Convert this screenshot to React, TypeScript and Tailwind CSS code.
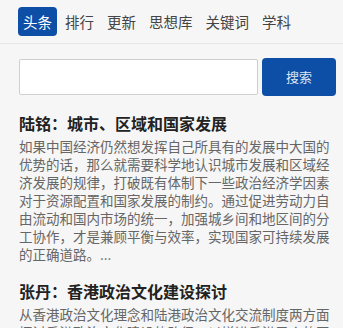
const FONT = '"Noto Sans CJK SC", "Noto Sans", sans-serif';

const tabs = ["头条", "排行", "更新", "思想库", "关键词", "学科"];

const articles = [
  {
    title: "陆铭：城市、区域和国家发展",
    body: "如果中国经济仍然想发挥自己所具有的发展中大国的优势的话，那么就需要科学地认识城市发展和区域经济发展的规律，打破既有体制下一些政治经济学因素对于资源配置和国家发展的制约。通过促进劳动力自由流动和国内市场的统一，加强城乡间和地区间的分工协作，才是兼顾平衡与效率，实现国家可持续发展的正确道路。...",
  },
  {
    title: "张丹：香港政治文化建设探讨",
    body: "从香港政治文化理念和陆港政治文化交流制度两方面探讨香港政治文化建设的路径，以增进香港民众的国家认同。",
  },
];

export default function App() {
  return (
    <div
      className="h-[328px] w-[343px] overflow-hidden bg-[#f6f6f6]"
      style={{ fontFamily: FONT }}
    >
      <nav className="flex h-[44px] items-center gap-[3px] border-b border-[#e6e6e6] pl-[18px]">
        {tabs.map((t, i) => (
          <span
            key={t}
            className={
              i === 0
                ? "rounded-[4px] bg-[#0d4ea6] px-[5px] py-[3px] text-[14.5px] leading-[23px] text-white"
                : "px-[5px] py-[3px] text-[14.5px] leading-[23px] text-[#444]"
            }
          >
            {t}
          </span>
        ))}
      </nav>

      <div className="flex items-center gap-[4px] pl-[19px] pr-[7px] pt-[14px]">
        <input
          className="h-[36px] flex-1 rounded-[2px] border border-[#cfcfcf] bg-white outline-none"
          aria-label="搜索"
        />
        <button className="h-[38px] w-[74px] rounded-[4px] bg-[#0d4ea6] text-[13px] text-[#dbe5f4]">
          搜索
        </button>
      </div>

      <div className="pl-[19px] pr-[12px] pt-[15px]">
        {articles.map((a) => (
          <article key={a.title} className="mb-[16px]">
            <h2 className="text-[16px] font-bold leading-[24px] text-[#222]">
              {a.title}
            </h2>
            <p className="mt-[2px] text-[13.5px] leading-[18px] text-[#666]">
              {a.body}
            </p>
          </article>
        ))}
      </div>
    </div>
  );
}
